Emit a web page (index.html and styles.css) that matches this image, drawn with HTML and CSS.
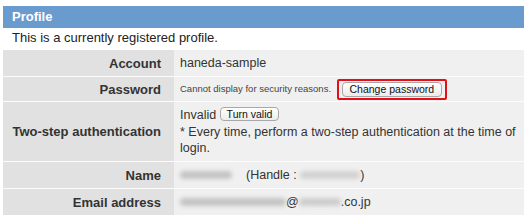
FILE: index.html
```html
<!DOCTYPE html>
<html lang="en">
<head>
    <meta charset="UTF-8">
    <title>Profile</title>
    <link rel="stylesheet" href="styles.css">
</head>
<body>
    <div class="profile">
        <h2 class="profile-title">Profile</h2>
        <p class="profile-intro">This is a currently registered profile.</p>
        <table class="profile-table">
            <tr class="row-account">
                <th>Account</th>
                <td>haneda-sample</td>
            </tr>
            <tr class="row-password">
                <th>Password</th>
                <td>
                    <span class="note">Cannot display for security reasons.</span>
                    <span class="highlight"><button class="btn">Change password</button></span>
                </td>
            </tr>
            <tr class="row-twostep">
                <th>Two-step authentication</th>
                <td>
                    <div class="status">Invalid <button class="btn btn-small">Turn valid</button></div>
                    <div>* Every time, perform a two-step authentication at the time of login.</div>
                </td>
            </tr>
            <tr class="row-name">
                <th>Name</th>
                <td><span class="blur blur-name"></span>(Handle : <span class="blur blur-handle"></span>)</td>
            </tr>
            <tr class="row-email">
                <th>Email address</th>
                <td><span class="blur blur-user"></span>@<span class="blur blur-domain"></span>.co.jp</td>
            </tr>
        </table>
    </div>
</body>
</html>
```

FILE: styles.css
```css
body {
    margin: 0;
    font-family: "Liberation Sans", Arial, sans-serif;
    color: #222;
    background: #fff;
}

.profile {
    width: 521px;
    margin: 6px 0 0 3px;
}

.profile-title {
    margin: 0;
    height: 22px;
    line-height: 22px;
    padding-left: 9px;
    background: #6a9bcf;
    color: #fff;
    font-size: 13px;
    font-weight: bold;
}

.profile-intro {
    margin: 0;
    height: 22px;
    line-height: 20px;
    padding-left: 9px;
    font-size: 13px;
}

.profile-table {
    width: 100%;
    border-collapse: collapse;
    font-size: 13px;
}

.profile-table th,
.profile-table td {
    border-top: 1px solid #fcfcfc;
    vertical-align: middle;
    padding-top: 0;
    padding-bottom: 0;
}

.profile-table tr:first-child th,
.profile-table tr:first-child td {
    border-top: none;
}

.profile-table th {
    width: 158px;
    padding-left: 0;
    padding-right: 13px;
    text-align: right;
    background: #e1e1e1;
    font-weight: bold;
    color: #333;
}

.profile-table td {
    padding-left: 6px;
    padding-right: 2px;
    background: #f0f0f0;
    color: #333;
    font-size: 12.5px;
}

.row-account th, .row-account td { height: 26px; }
.row-password th, .row-password td { height: 24px; }
.row-twostep th, .row-twostep td { height: 59px; }
.row-name th, .row-name td { height: 26px; }
.row-email th, .row-email td { height: 26px; }

.row-twostep td {
    line-height: 16px;
}

.note {
    font-size: 9.5px;
    color: #444;
    margin-right: 2px;
}

.highlight {
    display: inline-block;
    border: 2px solid #e3101a;
    border-radius: 2px;
    padding: 1px 3px;
    vertical-align: middle;
}

.btn {
    display: block;
    font-family: "Liberation Sans", Arial, sans-serif;
    font-size: 10.5px;
    color: #111;
    background: linear-gradient(#ffffff, #ececec);
    border: 1px solid #a8a8a8;
    border-radius: 4px;
    padding: 0 7px;
    height: 15px;
    line-height: 13px;
}

.btn-small {
    display: inline-block;
    padding: 0 6px;
    height: 14px;
    vertical-align: 1px;
}

.status {
    margin-bottom: 1px;
}

.blur {
    display: inline-block;
    height: 8px;
    vertical-align: 0;
    background: #c4c4c4;
    border-radius: 4px;
    filter: blur(2px);
}

.blur-name { width: 52px; margin-right: 14px; }
.blur-handle { width: 60px; background: #d2d2d2; }
.blur-user { width: 106px; }
.blur-domain { width: 42px; background: #cdcdcd; }
```
